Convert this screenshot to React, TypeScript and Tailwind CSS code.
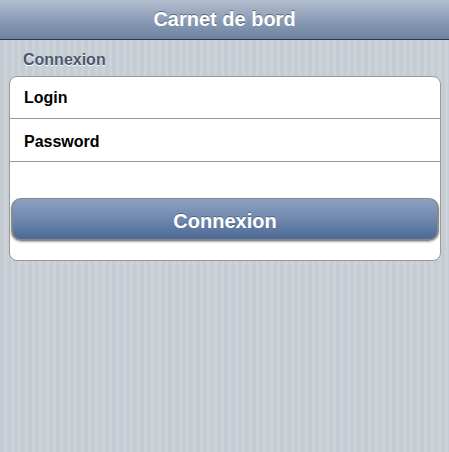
export default function App() {
  return (
    <div
      className="min-h-[452px] w-full bg-[repeating-linear-gradient(90deg,#c5ccd4_0px,#c5ccd4_4px,#cbd2d8_4px,#cbd2d8_7px)] text-black"
      style={{ fontFamily: '"Liberation Sans", Arial, sans-serif' }}
    >
      <header className="flex h-[40px] items-center justify-center border-b border-[#2d3642] bg-[linear-gradient(180deg,#b4c0d1_0%,#8b9db6_50%,#6d83a1_100%)] pb-[2px]">
        <h1 className="text-[20px] font-bold leading-none text-white [text-shadow:0_-1px_0_rgba(0,0,0,0.4)]">
          Carnet de bord
        </h1>
      </header>

      <h2 className="ml-[23px] mt-[10px] text-[16px] font-bold leading-[20px] text-[#4c566c] [text-shadow:0_1px_0_#fff]">
        Connexion
      </h2>

      <form
        className="mb-4 ml-[9px] mr-[8px] mt-[6px] overflow-hidden rounded-[8px] border border-[#999] bg-white"
        onSubmit={(e) => e.preventDefault()}
      >
        <div className="flex h-[42px] items-center border-b border-[#999] px-[14px] text-[16px] font-bold">
          Login
        </div>
        <div className="flex h-[43px] items-center border-b border-[#999] px-[14px] pt-[3px] text-[16px] font-bold">
          Password
        </div>
        <div className="h-[36px]" />
        <button
          type="submit"
          className="mx-px flex h-[43px] w-[calc(100%-2px)] items-center justify-center rounded-[10px] border border-x-2 border-b-2 border-[#8a8a8a] bg-[linear-gradient(180deg,#8ca2c1_0%,#6f88ad_50%,#4b6997_100%)] pt-[3px] text-[20px] font-bold text-white shadow-[0_1px_2px_rgba(0,0,0,0.35)] [text-shadow:0_-1px_0_rgba(0,0,0,0.3)]"
        >
          Connexion
        </button>
        <div className="h-[19px]" />
      </form>
    </div>
  );
}
